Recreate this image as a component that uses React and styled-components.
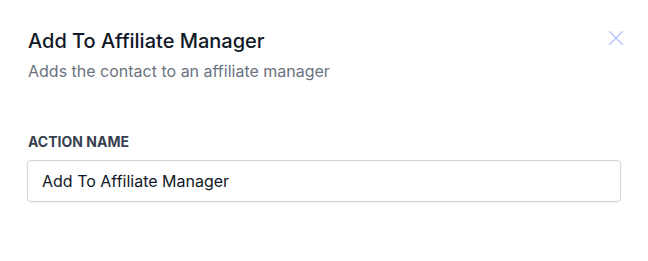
import React from "react";
import styled, { createGlobalStyle } from "styled-components";

const Global = createGlobalStyle`
  html, body { margin: 0; padding: 0; background: #fff; }
  body { font-family: Inter, "Noto Sans", sans-serif; -webkit-font-smoothing: antialiased; }
`;

const Panel = styled.div`
  width: 648px;
  height: 261px;
  box-sizing: border-box;
  padding: 27px 27px 0 27px;
  background: #fff;
`;

const Header = styled.div`
  display: flex;
  justify-content: space-between;
  align-items: flex-start;
`;

const TitleBlock = styled.div`
  display: flex;
  flex-direction: column;
  gap: 4px;
  padding-left: 1px;
`;

const Title = styled.h2`
  margin: 0;
  font-size: 20px;
  line-height: 28px;
  font-weight: 500;
  color: #111827;
`;

const Subtitle = styled.p`
  margin: 0;
  font-size: 16px;
  line-height: 24px;
  color: #6b7280;
`;

const CloseButton = styled.button`
  border: 0;
  background: none;
  padding: 0;
  margin: 1px -5px 0 0;
  width: 20px;
  height: 20px;
  display: flex;
  align-items: center;
  justify-content: center;
  color: #bcc7fc;
  cursor: pointer;
`;

const Field = styled.div`
  margin-top: 49px;
  display: flex;
  flex-direction: column;
  gap: 8px;
`;

const Label = styled.label`
  font-size: 14px;
  line-height: 20px;
  font-weight: 700;
  color: #374151;
  text-transform: uppercase;
  padding-left: 1px;
`;

const Input = styled.input`
  box-sizing: border-box;
  width: 594px;
  height: 42px;
  border: 1px solid #d1d5db;
  border-radius: 4px;
  padding: 0 14px;
  font-family: Inter, "Noto Sans", sans-serif;
  font-size: 16px;
  color: #111827;
  background: #fff;
  box-shadow: 0 1px 2px rgba(0, 0, 0, 0.05);
  outline: none;
`;

export default function App() {
  return (
    <>
      <Global />
      <Panel>
        <Header>
          <TitleBlock>
            <Title>Add To Affiliate Manager</Title>
            <Subtitle>Adds the contact to an affiliate manager</Subtitle>
          </TitleBlock>
          <CloseButton aria-label="Close">
            <svg width="20" height="20" viewBox="0 0 20 20" fill="none" stroke="currentColor" strokeWidth="1.6" strokeLinecap="round">
              <path d="M3.5 3.5l13 13M16.5 3.5l-13 13" />
            </svg>
          </CloseButton>
        </Header>
        <Field>
          <Label>Action Name</Label>
          <Input defaultValue="Add To Affiliate Manager" />
        </Field>
      </Panel>
    </>
  );
}
